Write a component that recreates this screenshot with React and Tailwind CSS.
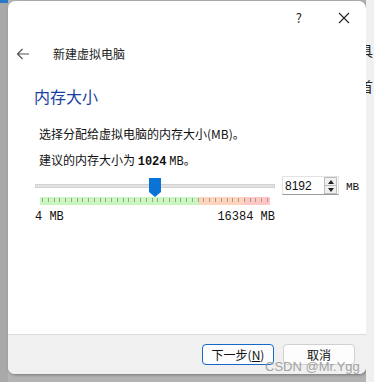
import React from 'react'

const ticks = Array.from({ length: 40 }, (_, i) => i)

export default function App() {
  return (
    <div
      className="relative w-[374px] h-[382px] overflow-hidden bg-[#b3b3b3] flex"
      style={{ fontFamily: '"Noto Sans CJK SC", "Noto Sans", sans-serif' }}
    >
      {/* left strip of the window behind */}
      <div className="w-[8px] h-full bg-[#a9a9a9] flex flex-col">
        <div className="h-[3px] w-full bg-[#2a78c9]" />
      </div>

      {/* dialog */}
      <div className="w-[358px] h-[373px] mt-[1px] bg-white rounded-t-[7px] rounded-b-[7px] flex flex-col overflow-hidden shadow-[1px_1px_3px_rgba(0,0,0,0.35)]">
        {/* title bar */}
        <div className="h-[32px] flex items-center justify-end pr-[16px] text-[#222]">
          <span className="text-[13px] mr-[36px] mt-[2px]">?</span>
          <svg width="12" height="12" viewBox="0 0 12 12" className="mt-[1px]">
            <path d="M1 1L11 11M11 1L1 11" stroke="#222" strokeWidth="1.1" />
          </svg>
        </div>

        {/* header */}
        <div className="flex items-center h-[26px] mt-[8px] pl-[8px]">
          <svg width="14" height="12" viewBox="0 0 14 12">
            <path d="M13 6H1.5M6.5 1L1.5 6L6.5 11" stroke="#555" strokeWidth="1.2" fill="none" />
          </svg>
          <span className="ml-[23px] text-[12px] text-[#222]">新建虚拟电脑</span>
        </div>

        <div className="pl-[26px] mt-[18px] text-[16px] leading-[22px] text-[#1a3fa0]">内存大小</div>

        <div className="pl-[31px] mt-[19px] text-[12px] leading-[16px] text-[#111]">选择分配给虚拟电脑的内存大小(MB)。</div>
        <div className="pl-[31px] mt-[10px] text-[12px] leading-[16px] text-[#111]">
          建议的内存大小为 <span className="font-bold" style={{ fontFamily: '"Liberation Mono", monospace' }}>1024</span>{' '}
          <span style={{ fontFamily: '"Liberation Mono", monospace' }}>MB</span>。
        </div>

        {/* slider row */}
        <div className="flex mt-[8px] pl-[27px]">
          <div className="w-[240px] flex flex-col">
            <div className="relative h-[19px]">
              <div className="absolute left-0 right-0 top-[6px] h-[4px] bg-[#e3e3e3] border border-[#d2d2d2]" />
              <svg className="absolute left-[114px] top-0" width="12" height="19" viewBox="0 0 12 19">
                <path d="M0 0H12V14L6 19L0 14Z" fill="#0a74d6" />
              </svg>
            </div>
            <div className="ml-[5px] w-[230px] h-[8px] flex">
              <div className="w-[159px] bg-[#c8f8c0]" />
              <div className="w-[45px] bg-[#ffd4bf]" />
              <div className="w-[26px] bg-[#ffc6c6]" />
            </div>
            <div className="ml-[5px] w-[230px] h-[8px] -mt-[8px] flex justify-between px-[2px]">
              {ticks.map((i) => (
                <div key={i} className="w-[1px] h-[4px] mt-[1px] bg-[#a89c90]" />
              ))}
            </div>
            <div
              className="flex justify-between mt-[5px] text-[12px] leading-[14px] text-[#111]"
              style={{ fontFamily: '"Liberation Mono", monospace' }}
            >
              <span>4 MB</span>
              <span>16384 MB</span>
            </div>
          </div>

          <div className="ml-[7px] mt-[-2px] w-[57px] h-[19px] flex items-center bg-white border border-[#e3e3e3] border-b-[#9a9a9a]">
            <span className="flex-1 pl-[2px] text-[12px] text-[#111]" style={{ fontFamily: '"Liberation Sans", sans-serif' }}>8192</span>
            <div className="w-[13px] h-[17px] mr-[1px] flex flex-col border border-[#bdbdbd] bg-[#f0f0f0]">
              <div className="flex-1 flex items-center justify-center border-b border-[#bdbdbd]">
                <svg width="6" height="4" viewBox="0 0 6 4"><path d="M0 4L3 0L6 4Z" fill="#222" /></svg>
              </div>
              <div className="flex-1 flex items-center justify-center">
                <svg width="6" height="4" viewBox="0 0 6 4"><path d="M0 0L3 4L6 0Z" fill="#222" /></svg>
              </div>
            </div>
          </div>
          <span className="ml-[7px] mt-[1px] text-[11px] text-[#111]" style={{ fontFamily: '"Liberation Mono", monospace' }}>MB</span>
        </div>

        <div className="flex-1" />

        {/* footer */}
        <div className="h-[40px] bg-[#f0f0f0] border-t border-[#dcdcdc] flex items-start justify-end pt-[9px] pr-[11px] gap-[9px]">
          <button className="w-[72px] h-[21px] rounded-[4px] bg-[#fdfdfd] border border-[#1669c6] text-[12px] text-[#111] flex items-center justify-center">
            下一步(<span className="underline">N</span>)
          </button>
          <button className="w-[72px] h-[21px] rounded-[4px] bg-[#fdfdfd] border border-[#d0d0d0] text-[12px] text-[#111] flex items-center justify-center">
            取消
          </button>
        </div>
      </div>

      {/* right strip of the window behind */}
      <div className="w-[8px] h-full bg-[#f0f0f0] overflow-hidden text-[14px] text-[#222] flex flex-col">
        <span className="-ml-[7px] mt-[40px] leading-[20px]">具</span>
        <span className="-ml-[7px] mt-[16px] leading-[20px]">首</span>
      </div>

      {/* watermark */}
      <span
        className="absolute left-[265px] top-[357px] text-[13px] text-[#9a9a9a] opacity-90"
        style={{ fontFamily: '"Liberation Sans", sans-serif' }}
      >
        CSDN @Mr.Ygg
      </span>
    </div>
  )
}
